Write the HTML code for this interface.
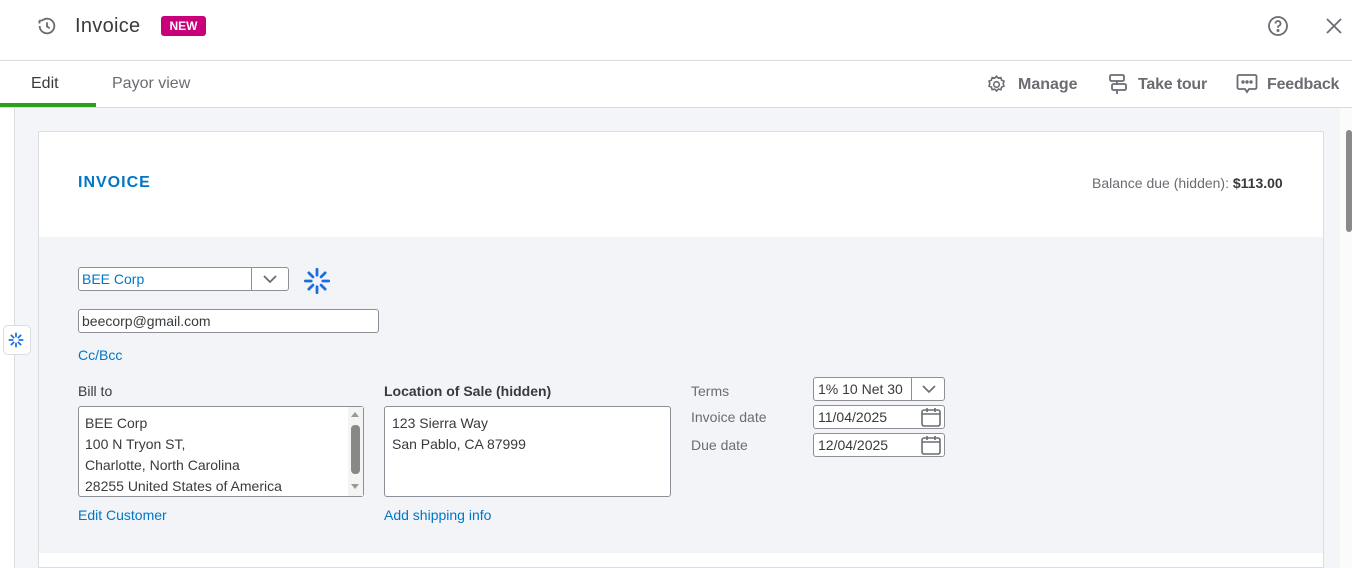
<!DOCTYPE html>
<html><head><style>
*{box-sizing:border-box;margin:0;padding:0}
body{width:1352px;height:568px;overflow:hidden;font-family:"Liberation Sans",Arial,sans-serif;background:#fff;position:relative;color:#393a3d}
.abs{position:absolute}
.hdr{top:0;left:0;width:1352px;height:61px;border-bottom:1px solid #dcdcdc}
.tabs{top:61px;left:0;width:1352px;height:47px;border-bottom:1px solid #dcdcdc}
.lnk{color:#0077c5;font-size:14px}
.inp{border:1px solid #8d9096;border-radius:3px;background:#fff;font-size:14px}
.lbl{font-size:14px;color:#393a3d}
</style></head><body>
<div class="abs hdr">
 <svg class="abs" style="left:36px;top:15px" width="22" height="22" viewBox="0 0 24 24" fill="none" stroke="#6b6c72" stroke-width="2"><path d="M4 12a8 8 0 1 0 2.5-5.8"/><path d="M6.5 6.2L3.5 6M3.5 6l.4 3.3"/><path d="M12 8v4.5l3 2"/></svg>
 <div class="abs" style="left:75px;top:15px;font-size:20px;color:#393a3d;letter-spacing:0.3px">Invoice</div>
 <div class="abs" style="left:161px;top:16px;width:45px;height:20px;background:#c9007a;border-radius:3px;color:#fff;font-size:12px;font-weight:bold;text-align:center;line-height:20px">NEW</div>
 <svg class="abs" style="left:1267px;top:15px" width="22" height="22" viewBox="0 0 22 22" fill="none" stroke="#6b6c72" stroke-width="1.8"><circle cx="11" cy="11" r="9"/><path d="M8.5 8.5a2.5 2.5 0 1 1 3.5 2.3c-.7.3-1 .8-1 1.5v.5"/><circle cx="11" cy="15.5" r=".6" fill="#6b6c72"/></svg>
 <svg class="abs" style="left:1325px;top:17px" width="18" height="18" viewBox="0 0 18 18" stroke="#6b6c72" stroke-width="1.8"><path d="M2 2l14 14M16 2L2 16"/></svg>
</div>
<div class="abs tabs">
 <div class="abs" style="left:31px;top:14px;font-size:16px;color:#393a3d">Edit</div>
 <div class="abs" style="left:0;top:42px;width:96px;height:4px;background:#2ca01c"></div>
 <div class="abs" style="left:112px;top:14px;font-size:16px;color:#6b6c72">Payor view</div>
 <svg class="abs" style="left:986px;top:13px" width="21" height="21" viewBox="0 0 24 24" fill="none" stroke="#6b6c72" stroke-width="1.8"><circle cx="12" cy="12" r="3.2"/><path d="M12 2.5l2 2.2 3-.6.8 2.9 2.8 1.2-1 2.8 1 2.8-2.8 1.2-.8 2.9-3-.6-2 2.2-2-2.2-3 .6-.8-2.9-2.8-1.2 1-2.8-1-2.8 2.8-1.2.8-2.9 3 .6z"/></svg>
 <div class="abs" style="left:1018px;top:15px;font-size:16px;font-weight:bold;color:#6b6c72">Manage</div>
 <svg class="abs" style="left:1108px;top:12px" width="20" height="22" viewBox="0 0 20 22" fill="none" stroke="#6b6c72" stroke-width="1.8"><rect x="2" y="2" width="14" height="6" rx="1.5"/><rect x="4" y="11" width="14" height="6" rx="1.5"/><path d="M9 8v3M9 17v4"/></svg>
 <div class="abs" style="left:1138px;top:15px;font-size:16px;font-weight:bold;color:#6b6c72;letter-spacing:-0.2px">Take tour</div>
 <svg class="abs" style="left:1236px;top:12px" width="22" height="22" viewBox="0 0 22 22" fill="none" stroke="#6b6c72" stroke-width="1.8"><path d="M3 2h16a1.5 1.5 0 0 1 1.5 1.5v11a1.5 1.5 0 0 1-1.5 1.5h-6l-2 3-2-3H3a1.5 1.5 0 0 1-1.5-1.5v-11A1.5 1.5 0 0 1 3 2z"/><circle cx="7" cy="9" r=".8" fill="#6b6c72"/><circle cx="11" cy="9" r=".8" fill="#6b6c72"/><circle cx="15" cy="9" r=".8" fill="#6b6c72"/></svg>
 <div class="abs" style="left:1267px;top:15px;font-size:16px;font-weight:bold;color:#6b6c72;letter-spacing:-0.2px">Feedback</div>
</div>
<div class="abs" style="left:0;top:108px;width:1352px;height:460px;background:#f4f5f8"></div>
<div class="abs" style="left:0;top:108px;width:15px;height:460px;background:#fff;border-right:1px solid #dcdde1"></div>
<div class="abs" style="left:1340px;top:108px;width:12px;height:460px;background:#fbfbfb"></div>
<div class="abs" style="left:1346px;top:130px;width:6px;height:102px;background:#8a8a8a;border-radius:3px"></div>
<div class="abs" style="left:3px;top:325px;width:28px;height:30px;background:#fff;border:1px solid #dcdde1;border-radius:5px"></div>
<svg class="abs" style="left:8px;top:332px" width="16" height="16" viewBox="0 0 24 24" stroke="#1a6fe0" stroke-width="2.6" stroke-linecap="round"><path d="M12 2v5M12 17v5M2 12h5M17 12h5M5 5l3.5 3.5M15.5 15.5L19 19M19 5l-3.5 3.5M8.5 15.5L5 19"/></svg>
<div class="abs" style="left:38px;top:131px;width:1286px;height:437px;background:#fff;border:1px solid #dcdde1"></div>
<div class="abs" style="left:39px;top:237px;width:1284px;height:316px;background:#f3f4f8"></div>
<div class="abs" style="left:78px;top:174px;font-size:16px;font-weight:bold;color:#0077c5;letter-spacing:1px">INVOICE</div>
<div class="abs" style="left:1092px;top:175px;font-size:14px;color:#6b6c72">Balance due (hidden): <b style="color:#393a3d">$113.00</b></div>
<div class="abs inp" style="left:78px;top:267px;width:211px;height:24px"></div>
<div class="abs" style="left:82px;top:271px;font-size:14px;color:#0077c5">BEE Corp</div>
<div class="abs" style="left:251px;top:268px;width:1px;height:22px;background:#8d9096"></div>
<svg class="abs" style="left:262px;top:273px" width="16" height="12" viewBox="0 0 16 12" fill="none" stroke="#6b6c72" stroke-width="1.8"><path d="M2 3l6 6 6-6"/></svg>
<svg class="abs" style="left:303px;top:267px" width="28" height="28" viewBox="0 0 24 24" stroke="#1a6fe0" stroke-width="2.4" stroke-linecap="round"><path d="M12 2v5M12 17v5M2 12h5M17 12h5M5 5l3.5 3.5M15.5 15.5L19 19M19 5l-3.5 3.5M8.5 15.5L5 19"/></svg>
<div class="abs inp" style="left:78px;top:309px;width:301px;height:24px"></div>
<div class="abs" style="left:82px;top:313px;font-size:14px;color:#393a3d">beecorp@gmail.com</div>
<div class="abs lnk" style="left:78px;top:347px">Cc/Bcc</div>
<div class="abs lbl" style="left:78px;top:383px">Bill to</div>
<div class="abs inp" style="left:78px;top:406px;width:286px;height:91px"></div>
<div class="abs" style="left:85px;top:413px;font-size:14px;line-height:21px;color:#393a3d">BEE Corp<br>100 N Tryon ST,<br>Charlotte, North Carolina<br>28255 United States of America</div>
<div class="abs" style="left:348px;top:407px;width:15px;height:89px;background:#f4f4f4"></div>
<div class="abs" style="left:351px;top:425px;width:9px;height:49px;background:#888;border-radius:4px"></div>
<div class="abs" style="left:351px;top:412px;width:0;height:0;border-left:4.5px solid transparent;border-right:4.5px solid transparent;border-bottom:5px solid #999"></div>
<div class="abs" style="left:351px;top:484px;width:0;height:0;border-left:4.5px solid transparent;border-right:4.5px solid transparent;border-top:5px solid #999"></div>
<div class="abs lnk" style="left:78px;top:507px">Edit Customer</div>
<div class="abs lbl" style="left:384px;top:383px;font-weight:bold">Location of Sale (hidden)</div>
<div class="abs inp" style="left:384px;top:406px;width:287px;height:91px"></div>
<div class="abs" style="left:392px;top:413px;font-size:14px;line-height:21px;color:#393a3d">123 Sierra Way<br>San Pablo, CA 87999</div>
<div class="abs lnk" style="left:384px;top:507px">Add shipping info</div>
<div class="abs lbl" style="left:691px;top:383px;color:#6b6c72">Terms</div>
<div class="abs lbl" style="left:691px;top:409px;color:#6b6c72">Invoice date</div>
<div class="abs lbl" style="left:691px;top:437px;color:#6b6c72">Due date</div>
<div class="abs inp" style="left:813px;top:377px;width:132px;height:24px"></div>
<div class="abs" style="left:818px;top:381px;font-size:14px">1% 10 Net 30</div>
<div class="abs" style="left:911px;top:378px;width:1px;height:22px;background:#8d9096"></div>
<svg class="abs" style="left:921px;top:384px" width="16" height="10" viewBox="0 0 16 10" fill="none" stroke="#6b6c72" stroke-width="1.6"><path d="M2 2l6 6 6-6"/></svg>
<div class="abs inp" style="left:813px;top:405px;width:132px;height:24px"></div>
<div class="abs" style="left:818px;top:409px;font-size:14px">11/04/2025</div>
<div class="abs inp" style="left:813px;top:433px;width:132px;height:24px"></div>
<div class="abs" style="left:818px;top:437px;font-size:14px">12/04/2025</div>
<svg class="abs" style="left:920px;top:406px" width="22" height="22" viewBox="0 0 22 22" fill="none" stroke="#6b6c72" stroke-width="1.6"><rect x="2" y="4" width="18" height="16" rx="2"/><path d="M2 8h18M7 2v4M15 2v4"/></svg>
<svg class="abs" style="left:920px;top:434px" width="22" height="22" viewBox="0 0 22 22" fill="none" stroke="#6b6c72" stroke-width="1.6"><rect x="2" y="4" width="18" height="16" rx="2"/><path d="M2 8h18M7 2v4M15 2v4"/></svg>
</body></html>
